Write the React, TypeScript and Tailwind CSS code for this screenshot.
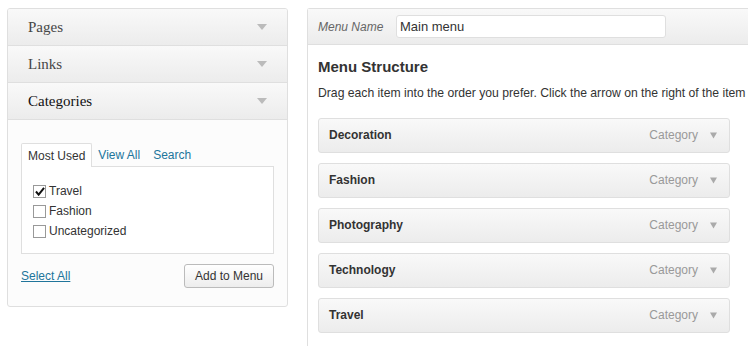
import React from 'react';

const sans = { fontFamily: '"Liberation Sans", Arial, sans-serif' };

function Caret({ className }: { className?: string }) {
  return (
    <svg width="10" height="6" viewBox="0 0 10 6" className={className}>
      <path d="M0 0 L10 0 L5 6 Z" fill="currentColor" />
    </svg>
  );
}

function SectionHeader({ title, dark }: { title: string; dark?: boolean }) {
  return (
    <div className="flex h-[37px] items-center justify-between border-b border-[#dfdfdf] bg-gradient-to-b from-[#f9f9f9] to-[#ececec] pl-[20px] pr-[20px]">
      <span
        className={`text-[15px] ${dark ? 'text-[#111]' : 'text-[#464646]'}`}
        style={{ fontFamily: '"Liberation Serif", Georgia, serif' }}
      >
        {title}
      </span>
      <Caret className="text-[#bbb]" />
    </div>
  );
}

function Check({ checked }: { checked?: boolean }) {
  return (
    <span className="flex h-[13px] w-[13px] items-center justify-center border border-[#999] bg-white">
      {checked && (
        <svg width="10" height="9" viewBox="0 0 11 10">
          <path d="M1 5 L4 8.5 L10 1" stroke="#111" strokeWidth="2.2" fill="none" />
        </svg>
      )}
    </span>
  );
}

const items = ['Decoration', 'Fashion', 'Photography', 'Technology', 'Travel'];

export default function App() {
  return (
    <div className="flex h-[346px] w-[748px] overflow-hidden bg-white pt-[8px]" style={sans}>
      <div className="ml-[7px] w-[281px] shrink-0 self-start overflow-hidden rounded-[3px] border border-[#dfdfdf] bg-[#fcfcfc]">
        <SectionHeader title="Pages" />
        <SectionHeader title="Links" />
        <SectionHeader title="Categories" dark />
        <div className="h-[186px] px-[13px] pt-[23px]">
          <div className="flex text-[12px]">
            <span className="h-[24px] rounded-t-[2px] border border-b-0 border-[#dfdfdf] bg-white px-[6px] pt-[3px] text-[#333]">
              Most Used
            </span>
            <span className="pl-[6px] pr-[7px] pt-[3px] text-[#21759b]">View All</span>
            <span className="px-[6px] pt-[3px] text-[#21759b]">Search</span>
          </div>
          <div className="-mt-[1px] h-[88px] border border-[#dfdfdf] bg-white pl-[11px] pt-[14px] text-[12px] text-[#333]">
            {[
              ['Travel', true],
              ['Fashion', false],
              ['Uncategorized', false],
            ].map(([label, checked]) => (
              <div key={label as string} className="flex h-[20px] items-center gap-[3px]">
                <Check checked={checked as boolean} />
                <span>{label}</span>
              </div>
            ))}
          </div>
          <div className="mt-[10px] flex items-center justify-between">
            <span className="text-[12px] text-[#21759b] underline">Select All</span>
            <span className="flex h-[24px] items-center rounded-[3px] border border-[#bbb] bg-gradient-to-b from-white to-[#ededed] px-[10px] text-[12px] text-[#333]">
              Add to Menu
            </span>
          </div>
        </div>
      </div>

      <div className="ml-[19px] w-[460px] shrink-0 self-stretch rounded-tl-[3px] border-l border-t border-[#dfdfdf] bg-white">
        <div className="flex h-[36px] items-center border-b border-[#dfdfdf] bg-gradient-to-b from-[#f9f9f9] to-[#ececec] pl-[10px]">
          <span className="w-[78px] text-[12px] italic text-[#666]">Menu Name</span>
          <span className="flex h-[23px] w-[270px] items-center rounded-[3px] border border-[#dfdfdf] bg-white pl-[3px] text-[13px] text-[#333]">
            Main menu
          </span>
        </div>
        <div className="px-[10px]">
          <div className="mt-[11px] text-[15px] font-bold text-[#333]">Menu Structure</div>
          <div className="mt-[5px] whitespace-nowrap text-[12.2px] text-[#333]">
            Drag each item into the order you prefer. Click the arrow on the right of the item
          </div>
          <div className="mt-[16px] flex w-[412px] flex-col gap-[10px]">
            {items.map((name) => (
              <div
                key={name}
                className="flex h-[35px] items-center justify-between rounded-[3px] border border-[#dfdfdf] bg-gradient-to-b from-[#f9f9f9] to-[#ececec] pl-[10px] pr-[12px]"
              >
                <span className="text-[12px] font-bold text-[#333]">{name}</span>
                <span className="flex items-center gap-[12px] text-[12px] text-[#999]">
                  Category
                  <svg width="7" height="7" viewBox="0 0 8 7">
                    <path d="M0 0 L8 0 L4 7 Z" fill="#aaa" />
                  </svg>
                </span>
              </div>
            ))}
          </div>
        </div>
      </div>
    </div>
  );
}
